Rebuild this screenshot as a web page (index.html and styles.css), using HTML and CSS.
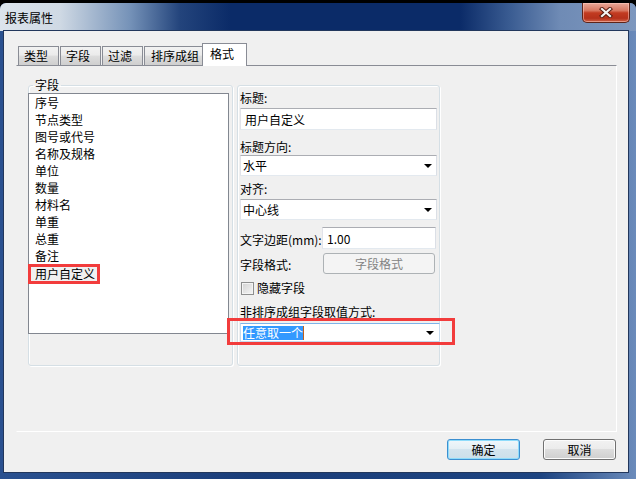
FILE: index.html
```html
<!DOCTYPE html>
<html lang="zh-CN">
<head>
    <meta charset="UTF-8">
    <title>报表属性</title>
    <link rel="stylesheet" href="styles.css">
</head>
<body>
    <div class="window">
        <div class="titlebar">
            <span class="title">报表属性</span>
            <button class="close" type="button">
                <svg width="14" height="11" viewBox="0 0 14 11">
                    <path d="M3 2 L11 9 M11 2 L3 9" stroke="#5a1d12" stroke-width="4.2" stroke-linecap="square"/>
                    <path d="M3 2 L11 9 M11 2 L3 9" stroke="#f4f4f4" stroke-width="2.2" stroke-linecap="square"/>
                </svg>
            </button>
        </div>

        <div class="client">
            <!-- schede -->
            <div class="tabs">
                <div class="tab">类型</div>
                <div class="tab">字段</div>
                <div class="tab">过滤</div>
                <div class="tab tab-wide">排序成组</div>
                <div class="tab tab-active">格式</div>
            </div>

            <div class="panel">
                <fieldset class="group-fields">
                    <legend>字段</legend>
                    <ul class="list">
                        <li>序号</li>
                        <li>节点类型</li>
                        <li>图号或代号</li>
                        <li>名称及规格</li>
                        <li>单位</li>
                        <li>数量</li>
                        <li>材料名</li>
                        <li>单重</li>
                        <li>总重</li>
                        <li>备注</li>
                        <li><span class="mark">用户自定义</span></li>
                    </ul>
                </fieldset>

                <div class="group-format">
                    <div class="field-label">标题:</div>
                    <div class="textbox textbox-title">用户自定义</div>

                    <div class="field-label label-gap">标题方向:</div>
                    <div class="combo combo-first">
                        <span>水平</span>
                        <span class="arrow"></span>
                    </div>

                    <div class="field-label label-gap-small">对齐:</div>
                    <div class="combo combo-second">
                        <span>中心线</span>
                        <span class="arrow"></span>
                    </div>

                    <div class="row row-margin">
                        <span class="row-label">文字边距(mm):</span>
                        <div class="textbox textbox-margin">1.00</div>
                    </div>

                    <div class="row row-format">
                        <span class="row-label">字段格式:</span>
                        <button class="btn-disabled" type="button">字段格式</button>
                    </div>

                    <div class="check-row">
                        <span class="checkbox"></span>
                        <span>隐藏字段</span>
                    </div>

                    <div class="field-label label-gap">非排序成组字段取值方式:</div>
                    <div class="mark-box">
                        <div class="combo combo-focus">
                            <span class="selected-text">任意取一个</span>
                            <span class="arrow"></span>
                        </div>
                    </div>
                </div>
            </div>

            <div class="actions">
                <button class="btn btn-default" type="button">确定</button>
                <button class="btn" type="button">取消</button>
            </div>
        </div>
    </div>
</body>
</html>
```

FILE: styles.css
```css
/* Base */
body {
    margin: 0;
    background-color: #000;
    font-family: "Noto Sans CJK SC", "Noto Sans", sans-serif;
    font-size: 12px;
    color: #000;
}

/* Finestra con cornice */
.window {
    width: 636px;
    height: 476px;
    margin-top: 3px;
    display: flex;
    flex-direction: column;
    background: linear-gradient(to right, #2a5190 0%, #1a3d79 40%, #1d4481 85%, #6b8bbb 100%);
    border-radius: 6px 6px 0 0;
    overflow: hidden;
}

.titlebar {
    height: 28px;
    display: flex;
    align-items: flex-start;
    background: linear-gradient(to right, #dce4ec 0px, #cfd9e4 60px, #7592b8 130px, #23447c 180px, #0b2b68 230px, #0b2b68 460px, #3a5c92 510px, #6f8bb5 560px, #7d97be 636px);
}

.title {
    padding: 8px 0 0 5px;
    line-height: 14px;
}

.close {
    margin-left: auto;
    margin-right: 6px;
    width: 48px;
    height: 20px;
    padding: 0;
    border: 1px solid #5e2419;
    border-top: none;
    border-radius: 0 0 5px 5px;
    background: linear-gradient(#eaa899, #d7765f 40%, #c23b21 52%, #b5311b 80%, #cf6146);
    box-shadow: inset 0 0 0 1px rgba(255, 210, 200, 0.5);
    display: flex;
    align-items: center;
    justify-content: center;
}

/* Area client */
.client {
    margin: 0 8px 0 4px;
    height: 441px;
    box-sizing: border-box;
    padding-top: 12px;
    background-color: #f0f0f0;
    box-shadow: 0 0 0 1px #22375c;
}

/* Schede */
.tabs {
    display: flex;
    align-items: flex-end;
    gap: 1px;
    height: 22px;
    margin-left: 14px;
}

.tab {
    height: 18px;
    line-height: 18px;
    padding: 0 10px 0 5px;
    border: 1px solid #898c95;
    border-bottom: none;
    background: linear-gradient(#f2f2f2, #ebebeb 45%, #dddddd 50%, #cfcfcf);
}

.tab-wide {
    padding: 0 3px 0 6px;
}

.tab-active {
    position: relative;
    z-index: 1;
    height: 22px;
    line-height: 20px;
    margin-left: -2px;
    margin-bottom: -1px;
    padding: 0 12px 0 7px;
    background: #fff;
}

.panel {
    width: 601px;
    height: 367px;
    box-sizing: border-box;
    margin-left: 12px;
    padding: 12px 0 0 11px;
    border-top: 1px solid #898c95;
    border-right: 1px solid #fff;
    border-bottom: 1px solid #fff;
    border-left: 1px solid #f0f0f0;
    display: flex;
    align-items: flex-start;
}

/* Gruppo campi */
.group-fields {
    margin: 0;
    padding: 0 3px 31px 0;
    border: 1px solid #d5dfe5;
    border-radius: 3px;
    box-shadow: inset 1px 1px 0 #fff, 1px 1px 0 #fff;
}

.group-fields legend {
    margin-left: 4px;
    padding: 0 2px;
    line-height: 14px;
}

.list {
    list-style: none;
    margin: 1px 0 0 -1px;
    padding: 0;
    width: 201px;
    height: 241px;
    box-sizing: border-box;
    border: 1px solid #828790;
    background-color: #fff;
}

.list li {
    height: 17px;
    line-height: 17px;
    padding-left: 6px;
}

.mark {
    display: inline-block;
    vertical-align: top;
    margin-left: -7px;
    padding: 0 2px 0 4px;
    line-height: 14px;
    border: 3px solid #f23c3c;
    background-color: #f0f0f0;
}

/* Gruppo formato */
.group-format {
    width: 203px;
    height: 281px;
    box-sizing: border-box;
    margin: 7px 0 0 4px;
    padding: 5px 0 0 2px;
    border: 1px solid #d5dfe5;
    border-radius: 3px;
    box-shadow: inset 1px 1px 0 #fff, 1px 1px 0 #fff;
    display: flex;
    flex-direction: column;
    align-items: flex-start;
}

.field-label {
    line-height: 14px;
}

.label-gap {
    margin-top: 10px;
}

.label-gap-small {
    margin-top: 6px;
}

.textbox {
    box-sizing: border-box;
    height: 22px;
    padding-left: 4px;
    display: flex;
    align-items: center;
    background-color: #fff;
    border: 1px solid;
    border-color: #abadb3 #dbdfe6 #e3e9ef #e2e3ea;
}

.textbox-title {
    width: 197px;
    margin-top: 3px;
}

.textbox-margin {
    width: 114px;
}

.combo {
    box-sizing: border-box;
    width: 197px;
    height: 21px;
    padding: 0 4px 0 2px;
    display: flex;
    align-items: center;
    justify-content: space-between;
    background-color: #fff;
    border: 1px solid;
    border-color: #abadb3 #dbdfe6 #e3e9ef #e2e3ea;
}

.combo-first {
    margin-top: 1px;
}

.combo-second {
    margin-top: 3px;
}

.arrow {
    width: 0;
    height: 0;
    border-left: 4px solid transparent;
    border-right: 4px solid transparent;
    border-top: 4px solid #000;
}

.row {
    display: flex;
    align-items: center;
}

.row-margin {
    margin-top: 7px;
}

.row-format {
    margin-top: 4px;
}

.row-label {
    width: 82px;
    padding-top: 2px;
}

.btn-disabled {
    width: 112px;
    height: 21px;
    margin-left: 1px;
    padding: 0;
    border: 1px solid #adb2b5;
    border-radius: 3px;
    background-color: #f4f4f4;
    color: #838383;
    font-family: inherit;
    font-size: 12px;
}

.check-row {
    margin-top: 7px;
    display: flex;
    align-items: center;
    gap: 3px;
    line-height: 14px;
}

.checkbox {
    width: 13px;
    height: 13px;
    box-sizing: border-box;
    margin-left: 1px;
    border: 1px solid #8e8f8f;
    background: linear-gradient(135deg, #d2d2d2, #f6f6f6);
    box-shadow: inset 0 0 0 1px #f4f4f4;
}

/* Riquadro rosso di evidenza */
.mark-box {
    width: 228px;
    box-sizing: border-box;
    margin: -1px 0 0 -13px;
    padding: 2px 0 0 10px;
    border: 3px solid #f23c3c;
}

.combo-focus {
    width: 200px;
    height: 19px;
    padding: 0 5px 0 2px;
    border-color: #7eb4ea #c5daed #c5daed #c5daed;
}

.selected-text {
    background-color: #3399ff;
    color: #fff;
    line-height: 14px;
    border-right: 1px solid #c0601c;
}

/* Pulsanti */
.actions {
    display: flex;
    justify-content: flex-end;
    gap: 23px;
    margin: 7px 12px 0 0;
}

.btn {
    width: 73px;
    height: 21px;
    padding: 0;
    border: 1px solid #707070;
    border-radius: 3px;
    background: linear-gradient(#f2f2f2, #ebebeb 50%, #dddddd 50%, #cfcfcf);
    box-shadow: inset 0 0 0 1px #fcfcfc;
    font-family: inherit;
    font-size: 12px;
    color: #000;
}

.btn-default {
    border-color: #3c8fd0;
    background: linear-gradient(#f0f7fb, #e3eef4 50%, #d3e4ee 50%, #cbdfea);
    box-shadow: inset 0 0 0 1px #8fdcfb;
}
```
